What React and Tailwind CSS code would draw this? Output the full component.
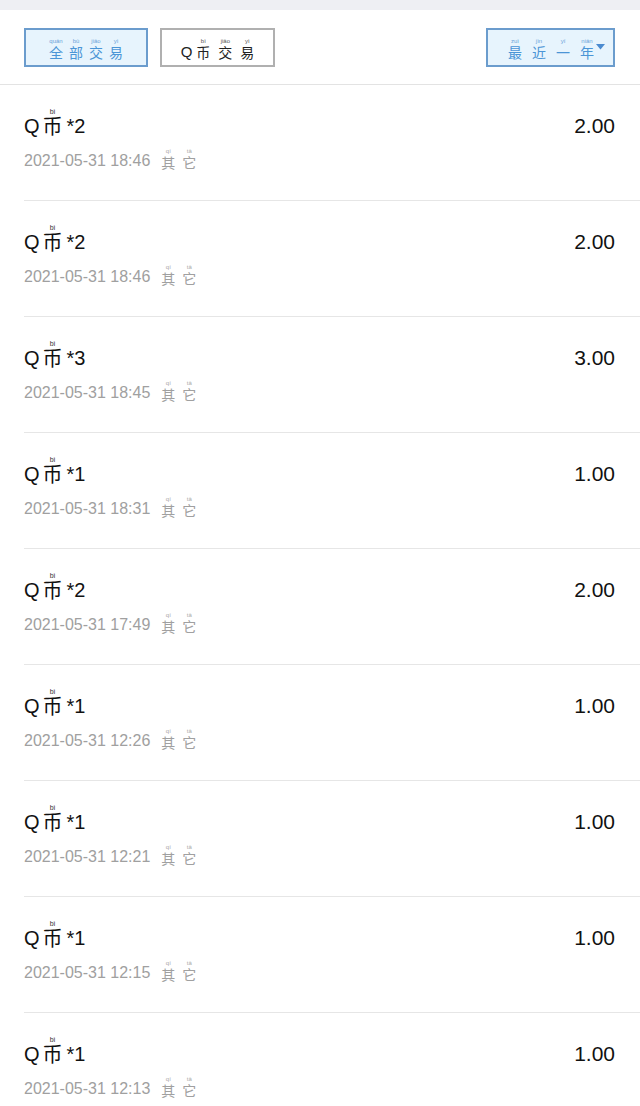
import React from "react";

const rows = [
  { n: 2, t: "2021-05-31 18:46", a: "2.00" },
  { n: 2, t: "2021-05-31 18:46", a: "2.00" },
  { n: 3, t: "2021-05-31 18:45", a: "3.00" },
  { n: 1, t: "2021-05-31 18:31", a: "1.00" },
  { n: 2, t: "2021-05-31 17:49", a: "2.00" },
  { n: 1, t: "2021-05-31 12:26", a: "1.00" },
  { n: 1, t: "2021-05-31 12:21", a: "1.00" },
  { n: 1, t: "2021-05-31 12:15", a: "1.00" },
  { n: 1, t: "2021-05-31 12:13", a: "1.00" },
];

function R({ c, p, rtClass = "text-[7px]" }) {
  return (
    <ruby className="[ruby-position:over]">
      {c}
      <rt className={`${rtClass} leading-none font-['Liberation_Sans'] text-center`}>{p}</rt>
    </ruby>
  );
}

function BtnText({ items, color, gap }) {
  return (
    <span className={`flex items-end ${gap} text-[14px] leading-none ${color}`}>
      {items.map(([c, p], i) => (
        <R key={i} c={c} p={p} rtClass="text-[6px] pb-[1px] text-[#6aa3d8]" />
      ))}
    </span>
  );
}

export default function App() {
  return (
    <div className="w-[640px] h-[1106px] overflow-hidden bg-white font-['Noto_Sans_CJK_SC','Liberation_Sans',sans-serif]">
      <div className="h-[10px] bg-[#eeeff3]" />
      <div className="h-[75px] border-b border-[#e3e3e3] flex items-center justify-between pl-6 pr-[25px] pt-[1px]">
        <div className="flex gap-3">
          <div className="w-[124px] h-[39px] bg-[#e7f4fd] border-2 border-[#6b9ccd] flex items-center justify-center pt-[2px]">
            <BtnText
              gap="gap-[6px]"
              color="text-[#4b95d6]"
              items={[["全", "quán"], ["部", "bù"], ["交", "jiāo"], ["易", "yì"]]}
            />
          </div>
          <div className="w-[115px] h-[39px] bg-white border-2 border-[#b0b0b0] flex items-center justify-center pt-[2px]">
            <span className="flex items-end text-[14px] leading-none text-[#222]">
              <span className="font-['Liberation_Sans'] text-[15px] mr-[4px]">Q</span>
              <span className="flex items-end gap-[8px]">
                <R c="币" p="bì" rtClass="text-[6px] pb-[1px] text-[#555]" />
                <R c="交" p="jiāo" rtClass="text-[6px] pb-[1px] text-[#555]" />
                <R c="易" p="yì" rtClass="text-[6px] pb-[1px] text-[#555]" />
              </span>
            </span>
          </div>
        </div>
        <div className="w-[129px] h-[39px] bg-[#e7f4fd] border-2 border-[#6b9ccd] flex items-center pl-[20px] pr-[8px] pt-[2px]">
          <BtnText
            gap="gap-[10px]"
            color="text-[#4b95d6]"
            items={[["最", "zuì"], ["近", "jìn"], ["一", "yī"], ["年", "nián"]]}
          />
          <svg className="ml-auto -mt-[4px]" width="9" height="6" viewBox="0 0 9 6">
            <path d="M0 0 H9 L4.5 5.5 Z" fill="#4b8bd0" />
          </svg>
        </div>
      </div>
      <div className="border-b border-[#d8d8d8]">
        {rows.map((r, i) => (
          <div
            key={i}
            className={`ml-6 pr-[25px] ${i === rows.length - 1 ? "h-[93px]" : "h-[116px] border-b border-[#e6e6e6]"} flex flex-col`}
          >
            <div className="flex items-end justify-between h-[52px]">
              <div className="flex items-end text-[20px] leading-none text-[#111] pb-[1px]">
                <span className="font-['Liberation_Sans'] mr-[3px]">Q</span>
                <R c="币" p="bì" rtClass="text-[7px] pb-[1px] text-[#333]" />
                <span className="font-['Liberation_Sans'] ml-[4px]">*{r.n}</span>
              </div>
              <div className="font-['Liberation_Sans'] text-[21px] leading-none text-[#111] pb-[1px]">
                {r.a}
              </div>
            </div>
            <div className="flex items-end mt-[11px] text-[16px] leading-none text-[#a0a0a0]">
              <span className="font-['Liberation_Sans']">{r.t}</span>
              <span className="flex items-end gap-[7px] ml-[11px] text-[14px]">
                <R c="其" p="qí" rtClass="text-[6px] pb-[1px] text-[#aaa]" />
                <R c="它" p="tā" rtClass="text-[6px] pb-[1px] text-[#aaa]" />
              </span>
            </div>
          </div>
        ))}
      </div>
    </div>
  );
}
